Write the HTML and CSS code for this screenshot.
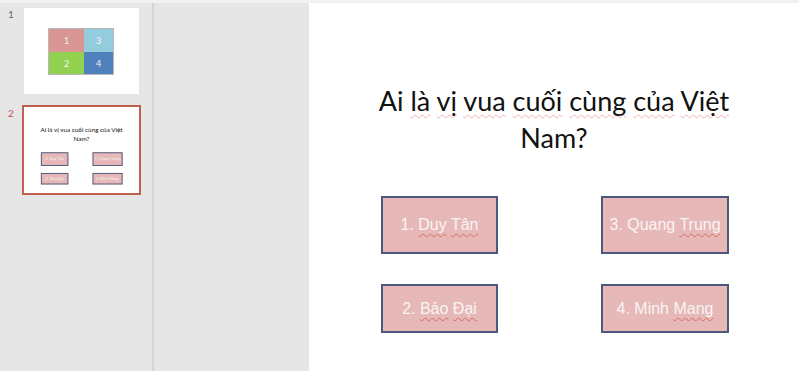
FILE: index.html
```
<!DOCTYPE html>
<html lang="vi">
<head>
<meta charset="utf-8">
<title>Slides</title>
<link rel="stylesheet" href="styles.css">
</head>
<body>
<div class="app">
  <div class="topline"></div>
  <div class="main">
    <aside class="panel">
      <div class="thumb-row">
        <span class="num">1</span>
        <div class="thumb">
          <div class="thumb-inner">
            <div class="grid4">
              <div class="cell c1">1</div>
              <div class="cell c3">3</div>
              <div class="cell c2">2</div>
              <div class="cell c4">4</div>
            </div>
          </div>
        </div>
      </div>
      <div class="thumb-row">
        <span class="num sel-num">2</span>
        <div class="thumb selected">
          <div class="thumb-inner">
            <div class="slide mini">
              <h1 class="title">Ai <span class="sp">là</span> <span class="sp">vị</span> <span class="sp">vua</span> <span class="sp">cuối</span> <span class="sp">cùng</span> <span class="sp">của</span> <span class="sp">Việt</span><br>Nam?</h1>
              <div class="answers">
                <div class="ans a1"><span class="lbl">1. <span class="sp">Duy</span> <span class="sp">Tân</span></span></div>
                <div class="ans a3"><span class="lbl">3. Quang <span class="sp">Trung</span></span></div>
                <div class="ans a2"><span class="lbl">2. <span class="sp">Bảo</span> <span class="sp">Đại</span></span></div>
                <div class="ans a4"><span class="lbl">4. Minh <span class="sp">Mang</span></span></div>
              </div>
            </div>
          </div>
        </div>
      </div>
    </aside>
    <div class="divider"></div>
    <div class="gutter"></div>
    <section class="slide">
      <h1 class="title">Ai <span class="sp">là</span> <span class="sp">vị</span> <span class="sp">vua</span> <span class="sp">cuối</span> <span class="sp">cùng</span> <span class="sp">của</span> <span class="sp">Việt</span><br>Nam?</h1>
      <div class="answers">
        <div class="ans a1"><span class="lbl">1. <span class="sp">Duy</span> <span class="sp">Tân</span></span></div>
        <div class="ans a3"><span class="lbl">3. Quang <span class="sp">Trung</span></span></div>
        <div class="ans a2"><span class="lbl">2. <span class="sp">Bảo</span> <span class="sp">Đại</span></span></div>
        <div class="ans a4"><span class="lbl">4. Minh <span class="sp">Mang</span></span></div>
      </div>
    </section>
  </div>
</div>
</body>
</html>
```
FILE: styles.css
```
* { box-sizing: border-box; }
html, body { margin: 0; padding: 0; }
body {
  width: 799px;
  height: 371px;
  overflow: hidden;
  background: #e6e6e6;
  font-family: "Liberation Sans", Arial, sans-serif;
}
.app { display: flex; flex-direction: column; height: 371px; }
.topline { height: 3px; background: #f1f1f1; flex: none; }
.main { display: flex; flex: 1; min-height: 0; }

.panel {
  width: 152px;
  flex: none;
  padding-top: 3px;
  display: flex;
  flex-direction: column;
  gap: 9px;
  background: #e6e6e6;
}
.thumb-row { display: flex; align-items: flex-start; }
.num {
  width: 22px;
  padding-left: 8px;
  padding-top: 2px;
  font-family: "Lato", "Liberation Sans", sans-serif;
  font-size: 10px;
  color: #6a6a6a;
}
.sel-num { color: #c0504d; }
.thumb {
  width: 119px;
  border: 2px solid transparent;
}
.thumb.selected { border-color: #c0604f; }
.thumb-inner {
  width: 115px;
  height: 86px;
  background: #fff;
  overflow: hidden;
  position: relative;
}
.grid4 {
  margin: 21px 0 0 25px;
  display: grid;
  grid-template-columns: 35px 29px;
  grid-template-rows: 23px 22px;
  width: 64px;
  outline: 1px solid #b8b8b8;
}
.cell {
  display: flex;
  align-items: center;
  justify-content: center;
  color: #f4f4f4;
  font-family: "Lato", sans-serif;
  font-size: 9px;
}
.c1 { background: #d99694; }
.c3 { background: #93cddd; }
.c2 { background: #92d050; }
.c4 { background: #4f81bd; }

.divider { width: 2px; background: #d6d6d6; flex: none; }
.gutter { width: 155px; flex: none; background: #e6e6e6; }

.slide {
  width: 490px;
  height: 368px;
  flex: none;
  background: #fff;
  padding-top: 79px;
}
.title {
  margin: 0;
  font-family: "Lato", "Open Sans", sans-serif;
  font-weight: 400;
  font-size: 27px;
  line-height: 37px;
  color: #111;
  text-align: center;
}
.sp {
  text-decoration: underline wavy #efb0b0;
  text-decoration-thickness: 1px;
  text-underline-offset: 3px;
  text-decoration-skip-ink: none;
}
.answers {
  margin: 40px 0 0 72px;
  display: grid;
  grid-template-columns: 117px 128px;
  grid-template-rows: 58px 49px;
  column-gap: 103px;
  row-gap: 30px;
}
.ans {
  border: 2px solid #4b5a7c;
  background: #e6b9b8;
  color: #f9f4f4;
  font-size: 16px;
  display: flex;
  align-items: center;
  justify-content: center;
  white-space: nowrap;
}
.ans .sp { text-decoration-color: #d96a66; }
.a1 { grid-column: 1; grid-row: 1; }
.a2 { grid-column: 1; grid-row: 2; }
.a3 { grid-column: 2; grid-row: 1; }
.a4 { grid-column: 2; grid-row: 2; }

.slide.mini {
  transform: scale(0.2347);
  transform-origin: 0 0;
}
.slide.mini .ans { border-width: 4px; }
.slide.mini .sp { text-decoration: none; }
```
